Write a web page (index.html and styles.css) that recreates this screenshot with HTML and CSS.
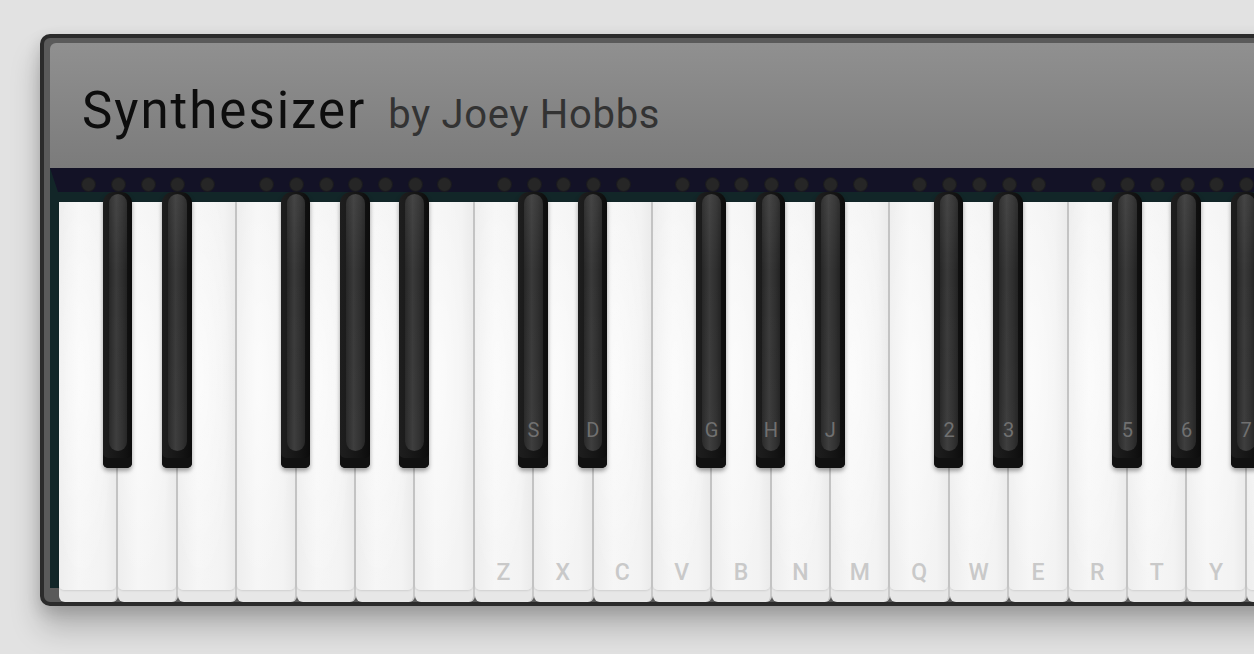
FILE: index.html
```html
<!DOCTYPE html>
<html lang="en">
<head>
<meta charset="utf-8">
<title>Synthesizer by Joey Hobbs</title>
<link rel="stylesheet" href="styles.css">
</head>
<body>
<div class="frame">
  <header class="header">
    <h1 class="title">Synthesizer</h1>
    <span class="byline">by Joey Hobbs</span>
  </header>
  <div class="keyboard">
    <div class="strip">
      <div class="leds">
        <span class="cell"><i class="led"></i></span><span class="cell"><i class="led"></i></span><span class="cell"><i class="led"></i></span><span class="cell"><i class="led"></i></span><span class="cell"><i class="led"></i></span><span class="cell"></span><span class="cell"><i class="led"></i></span><span class="cell"><i class="led"></i></span><span class="cell"><i class="led"></i></span><span class="cell"><i class="led"></i></span><span class="cell"><i class="led"></i></span><span class="cell"><i class="led"></i></span><span class="cell"><i class="led"></i></span><span class="cell"></span>
        <span class="cell"><i class="led"></i></span><span class="cell"><i class="led"></i></span><span class="cell"><i class="led"></i></span><span class="cell"><i class="led"></i></span><span class="cell"><i class="led"></i></span><span class="cell"></span><span class="cell"><i class="led"></i></span><span class="cell"><i class="led"></i></span><span class="cell"><i class="led"></i></span><span class="cell"><i class="led"></i></span><span class="cell"><i class="led"></i></span><span class="cell"><i class="led"></i></span><span class="cell"><i class="led"></i></span><span class="cell"></span>
        <span class="cell"><i class="led"></i></span><span class="cell"><i class="led"></i></span><span class="cell"><i class="led"></i></span><span class="cell"><i class="led"></i></span><span class="cell"><i class="led"></i></span><span class="cell"></span><span class="cell"><i class="led"></i></span><span class="cell"><i class="led"></i></span><span class="cell"><i class="led"></i></span><span class="cell"><i class="led"></i></span><span class="cell"><i class="led"></i></span><span class="cell"><i class="led"></i></span><span class="cell"><i class="led"></i></span><span class="cell"></span>
        <span class="cell"><i class="led"></i></span>
      </div>
    </div>
    <div class="keys">
      <div class="whites">
        <div class="white"><div class="face"><span class="wlabel"></span></div></div>
        <div class="white"><div class="face"><span class="wlabel"></span></div></div>
        <div class="white"><div class="face"><span class="wlabel"></span></div></div>
        <div class="white"><div class="face"><span class="wlabel"></span></div></div>
        <div class="white"><div class="face"><span class="wlabel"></span></div></div>
        <div class="white"><div class="face"><span class="wlabel"></span></div></div>
        <div class="white"><div class="face"><span class="wlabel"></span></div></div>
        <div class="white"><div class="face"><span class="wlabel">Z</span></div></div>
        <div class="white"><div class="face"><span class="wlabel">X</span></div></div>
        <div class="white"><div class="face"><span class="wlabel">C</span></div></div>
        <div class="white"><div class="face"><span class="wlabel">V</span></div></div>
        <div class="white"><div class="face"><span class="wlabel">B</span></div></div>
        <div class="white"><div class="face"><span class="wlabel">N</span></div></div>
        <div class="white"><div class="face"><span class="wlabel">M</span></div></div>
        <div class="white"><div class="face"><span class="wlabel">Q</span></div></div>
        <div class="white"><div class="face"><span class="wlabel">W</span></div></div>
        <div class="white"><div class="face"><span class="wlabel">E</span></div></div>
        <div class="white"><div class="face"><span class="wlabel">R</span></div></div>
        <div class="white"><div class="face"><span class="wlabel">T</span></div></div>
        <div class="white"><div class="face"><span class="wlabel">Y</span></div></div>
        <div class="white"><div class="face"><span class="wlabel"></span></div></div>
        <div class="white"><div class="face"><span class="wlabel"></span></div></div>
      </div>
      <div class="blacks">
        <span class="slot"></span><div class="black"><div class="cap"><span class="blabel"></span></div></div><span class="slot"></span><div class="black"><div class="cap"><span class="blabel"></span></div></div><span class="slot"></span><span class="slot"></span><span class="slot"></span><div class="black"><div class="cap"><span class="blabel"></span></div></div><span class="slot"></span><div class="black"><div class="cap"><span class="blabel"></span></div></div><span class="slot"></span><div class="black"><div class="cap"><span class="blabel"></span></div></div><span class="slot"></span><span class="slot"></span>
        <span class="slot"></span><div class="black"><div class="cap"><span class="blabel">S</span></div></div><span class="slot"></span><div class="black"><div class="cap"><span class="blabel">D</span></div></div><span class="slot"></span><span class="slot"></span><span class="slot"></span><div class="black"><div class="cap"><span class="blabel">G</span></div></div><span class="slot"></span><div class="black"><div class="cap"><span class="blabel">H</span></div></div><span class="slot"></span><div class="black"><div class="cap"><span class="blabel">J</span></div></div><span class="slot"></span><span class="slot"></span>
        <span class="slot"></span><div class="black"><div class="cap"><span class="blabel">2</span></div></div><span class="slot"></span><div class="black"><div class="cap"><span class="blabel">3</span></div></div><span class="slot"></span><span class="slot"></span><span class="slot"></span><div class="black"><div class="cap"><span class="blabel">5</span></div></div><span class="slot"></span><div class="black"><div class="cap"><span class="blabel">6</span></div></div><span class="slot"></span><div class="black"><div class="cap"><span class="blabel">7</span></div></div><span class="slot"></span><span class="slot"></span>
      </div>
    </div>
  </div>
</div>
</body>
</html>
```
FILE: styles.css
```css
* { box-sizing: border-box; }

html, body {
  height: 100%;
}

body {
  margin: 0;
  background: #e2e2e2;
  overflow: hidden;
  font-family: Roboto, "Noto Sans", sans-serif;
}

.frame {
  margin: 34px 0 0 40px;
  width: 1320px;
  border: 4px solid #2b2b2b;
  border-radius: 10px;
  background: #5a5a5a;
  padding: 5px 0 14px 6px;
  box-shadow: 0 22px 30px rgba(0, 0, 0, 0.22), 0 6px 16px rgba(0, 0, 0, 0.16);
}

.header {
  height: 125px;
  border-radius: 6px 0 0 0;
  background: linear-gradient(#909090, #7b7b7b);
  display: flex;
  align-items: baseline;
  padding: 42px 0 0 32px;
}

.title {
  margin: 0;
  font-size: 51px;
  font-weight: 400;
  line-height: 1;
  letter-spacing: 2px;
  color: #0d0d0d;
}

.byline {
  margin-left: 22px;
  font-size: 40px;
  line-height: 1;
  letter-spacing: 0.7px;
  color: #333;
}

.keyboard {
  height: 420px;
  background: #122628;
}

.strip {
  height: 24px;
  background: #131226;
  clip-path: polygon(0 0, 100% 0, 100% 100%, 8px 100%);
  padding: 10px 0 0 23.85px;
}

.leds {
  display: flex;
}

.cell {
  width: 29.7px;
  flex-shrink: 0;
  display: flex;
  justify-content: center;
}

.led {
  width: 13px;
  height: 13px;
  border-radius: 50%;
  background: #262626;
  box-shadow: 0 0 0 1px #1b1b1f;
}

.keys {
  position: relative;
  height: 396px;
  padding: 10px 0 0 9px;
}

.whites {
  display: flex;
  height: 400px;
}

.white {
  width: 59.4px;
  flex-shrink: 0;
  height: 400px;
  display: flex;
  flex-direction: column;
  padding-bottom: 12px;
  background: #e7e7e7;
  border-right: 2px solid #c9c9c9;
  border-radius: 0 0 6px 6px;
}

.face {
  flex: 1;
  display: flex;
  align-items: flex-end;
  justify-content: center;
  padding-bottom: 6px;
  border-radius: 0 0 5px 5px;
  background:
    radial-gradient(ellipse at 40% 45%, rgba(255, 255, 255, 0.6), rgba(255, 255, 255, 0) 70%),
    linear-gradient(to right, #eeeeee, #f6f6f6 35%, #f3f3f3 80%, #ebebeb);
  box-shadow: 0 1px 2px rgba(0, 0, 0, 0.1);
}

.wlabel {
  font-size: 23px;
  font-weight: 500;
  line-height: 1;
  color: #c9c9c9;
}

.blacks {
  position: absolute;
  top: 0;
  left: 22.85px;
  display: flex;
  align-items: flex-start;
}

.slot {
  width: 29.7px;
  flex-shrink: 0;
}

.black {
  width: 29.7px;
  flex-shrink: 0;
  height: 276px;
  padding: 2px 5px 0 6px;
  border-radius: 11px 11px 5px 5px;
  background: linear-gradient(to right, #1e1e1e, #1a1a1a 30%, #131313 70%, #0c0c0c);
  box-shadow: inset 0 -10px 0 #111111, 0 3px 4px rgba(0, 0, 0, 0.35);
}

.cap {
  height: 257px;
  display: flex;
  align-items: flex-end;
  justify-content: center;
  padding-bottom: 11px;
  border-radius: 10px;
  background:
    linear-gradient(rgba(255, 255, 255, 0.06), rgba(255, 255, 255, 0) 30%, rgba(255, 255, 255, 0.02) 90%),
    linear-gradient(to right, #262626, #3a3a3a 40%, #2e2e2e 75%, #222222);
}

.blabel {
  font-size: 20px;
  line-height: 1;
  color: #707070;
}
```
